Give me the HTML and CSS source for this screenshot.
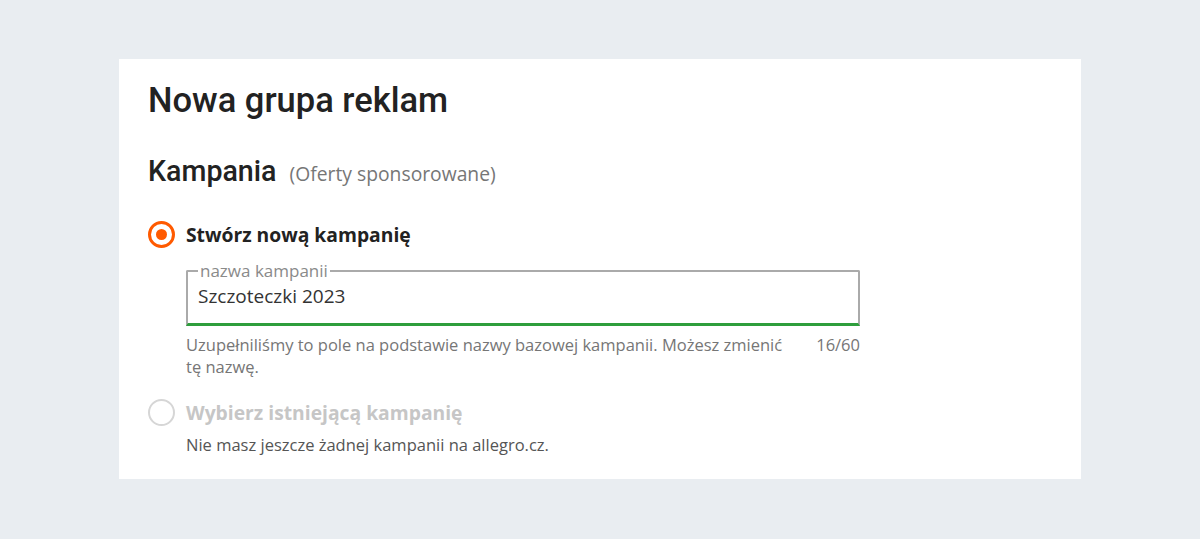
FILE: index.html
```html
<!DOCTYPE html>
<html lang="pl">
<head>
<meta charset="utf-8">
<link rel="stylesheet" href="styles.css">
</head>
<body>
<div class="card">
  <h1 class="title">Nowa grupa reklam</h1>
  <h2 class="section">Kampania <span class="sub">(Oferty sponsorowane)</span></h2>

  <div class="option">
    <span class="radio checked"></span>
    <span class="opt-label">Stwórz nową kampanię</span>
  </div>
  <div class="field-wrap">
    <fieldset class="field">
      <legend class="legend">nazwa kampanii</legend>
      <div class="value">Szczoteczki 2023</div>
    </fieldset>
    <div class="help">
      <span class="help-text">Uzupełniliśmy to pole na podstawie nazwy bazowej kampanii. Możesz zmienić tę nazwę.</span>
      <span class="counter">16/60</span>
    </div>
  </div>

  <div class="option disabled">
    <span class="radio"></span>
    <span class="opt-label">Wybierz istniejącą kampanię</span>
  </div>
  <div class="note">Nie masz jeszcze żadnej kampanii na allegro.cz.</div>
</div>
</body>
</html>
```

FILE: styles.css
```css
* { box-sizing: border-box; }
html, body { margin: 0; padding: 0; }
body {
  background: #e9edf1;
  padding-top: 59px;
  font-family: "Open Sans", sans-serif;
  color: #222;
}
.card {
  margin-left: 119px;
  width: 962px;
  height: 420px;
  background: #fff;
  padding: 21px 29px 0 29px;
}
.title {
  margin: 0;
  font-family: Roboto, sans-serif;
  font-weight: 500;
  font-size: 34.5px;
  line-height: 40px;
  color: #222;
}
.section {
  margin: 33px 0 0 0;
  font-family: Roboto, sans-serif;
  font-weight: 500;
  font-size: 28.6px;
  line-height: 36px;
  color: #222;
}
.sub {
  font-family: "Open Sans", sans-serif;
  font-weight: 400;
  font-size: 19.3px;
  color: #767676;
  margin-left: 6px;
}
.option {
  display: flex;
  align-items: center;
  gap: 11px;
  margin-top: 28px;
  height: 28px;
}
.radio {
  width: 27px;
  height: 27px;
  border-radius: 50%;
  border: 2px solid #d6d6d6;
  display: flex;
  align-items: center;
  justify-content: center;
  flex: none;
}
.radio.checked { border: 3px solid #ff5a00; }
.radio.checked::after {
  content: "";
  width: 11px;
  height: 11px;
  border-radius: 50%;
  background: #ff5a00;
}
.opt-label {
  font-weight: 700;
  font-size: 19.3px;
  color: #222;
}
.disabled .opt-label { color: #c6c6c6; }
.field-wrap {
  margin-left: 38px;
  width: 674px;
  margin-top: 14px;
}
.field {
  margin: 0;
  padding: 0 10px 0 10px;
  border: 2px solid #aaaaaa;
  border-bottom: 3px solid #2e9e3c;
  border-radius: 2px 2px 0 0;
  height: 64px;
}
.legend {
  padding: 0 2px;
  margin-left: 0;
  font-size: 17px;
  line-height: 18px;
  color: #8a8a8a;
}
.value {
  font-size: 19px;
  line-height: 26px;
  color: #333;
  padding-top: 3px;
}
.help {
  display: flex;
  justify-content: space-between;
  gap: 20px;
  margin-top: 8px;
  font-size: 16.5px;
  line-height: 22px;
  color: #767676;
}
.help-text { width: 610px; }
.counter { flex: none; }
.option.disabled { margin-top: 20px; }
.note {
  margin-left: 38px;
  margin-top: 8px;
  font-size: 16.5px;
  line-height: 22px;
  color: #555;
}
```
